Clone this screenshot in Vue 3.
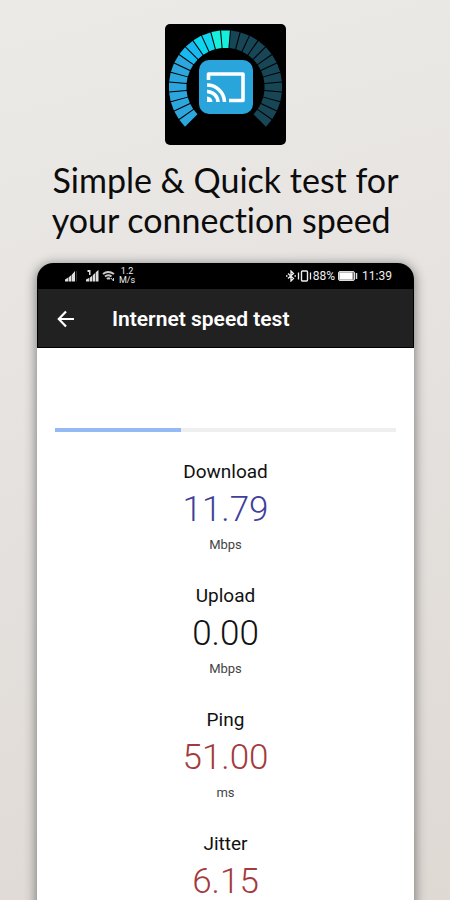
<script setup>
const segments = Array.from({ length: 27 }, (_, i) => {
  const angle = -130 + i * 10
  let color = '#174657'
  if (i < 8) color = '#2ca6dc'
  else if (i < 10) color = '#17b9f0'
  else if (i < 12) color = '#0fd5ee'
  else if (i < 14) color = '#16efdc'
  return { angle, color }
})

const progress = 37

const metrics = [
  { label: 'Download', value: '11.79', unit: 'Mbps', tone: 'blue' },
  { label: 'Upload', value: '0.00', unit: 'Mbps', tone: 'dark' },
  { label: 'Ping', value: '51.00', unit: 'ms', tone: 'red' },
  { label: 'Jitter', value: '6.15', unit: '', tone: 'red' },
]
</script>

<template>
  <div class="page">
    <header class="promo">
      <svg class="logo" viewBox="0 0 121 121" aria-hidden="true">
        <rect width="121" height="121" rx="5" fill="#000" />
        <path
          v-for="s in segments"
          :key="s.angle"
          d="M-4.4 -56.5 L4.4 -56.5 L2.9 -39 L-2.9 -39 Z"
          :fill="s.color"
          :transform="`translate(60.5 63) rotate(${s.angle})`"
        />
        <rect x="34" y="36" width="54" height="54" rx="10" fill="#2aa5dc" />
        <g fill="none" stroke="#fff" stroke-width="3.6">
          <path d="M43.5 56 V50 H78 V76.5 H64" stroke-linejoin="round" />
          <path d="M42 61 A17.5 17.5 0 0 1 59.5 78" />
          <path d="M42 67.5 A11 11 0 0 1 53 78" />
        </g>
        <path d="M42 72.5 A5.5 5.5 0 0 1 47.5 78 H42 Z" fill="#fff" />
      </svg>
      <h1 class="headline">Simple &amp; Quick test for<br />your connection speed&nbsp;</h1>
    </header>

    <main class="phone">
      <div class="status">
        <div class="status-left">
          <svg class="signal" viewBox="0 0 14 12" aria-hidden="true">
            <path d="M0 11.5 V9.5 L4 7 L7 4.5 L10 1 V11.5Z" fill="#ddd" />
            <path d="M3.5 6 V12 M6.5 4 V12" stroke="#000" stroke-width=".5" />
            <path d="M11 11.5 V1 H12 V11.5Z" fill="#333" />
          </svg>
          <svg class="signal" viewBox="0 0 14 12" aria-hidden="true">
            <path d="M0 11.5 V9.5 L4 7.5 L7 5 L10 2 L12.5 0 V11.5Z M1.500 0 H4.500 V5 H3 V2 H1.500Z" fill="#ddd" />
            <path d="M3.5 6 V12 M6.5 3 V12 M9.5 1 V12" stroke="#000" stroke-width=".6" />
          </svg>
          <svg class="wifi" viewBox="0 0 13 12" aria-hidden="true">
            <path d="M1 4 Q6 0 12 4 M3 6.5 Q6 4 9.5 6.5 M5 9 Q6.5 7.5 8 9" fill="none" stroke="#ccc" stroke-width="2" />
            <path d="M9 8 L11.5 11 M11.5 8 V11" stroke="#ccc" stroke-width="1" />
          </svg>
          <span class="rate">1.2<br />M/s</span>
        </div>
        <div class="status-right">
          <svg class="bluetooth" viewBox="0 0 10 12" aria-hidden="true">
            <path d="M2 3.5 L7.5 8.5 L5 11 V1 L7.5 3.5 L2 8.5 M0 6 H1.5 M8.5 6 H10" fill="none" stroke="#eee" stroke-width="1.3" />
          </svg>
          <svg class="vibrate" viewBox="0 0 15 12" aria-hidden="true">
            <rect x="4.5" y="1" width="6" height="10" rx="1" fill="none" stroke="#eee" stroke-width="1.4" />
            <path d="M1.5 2.5 V9.5 M13.5 2.5 V9.5" stroke="#eee" stroke-width="1.3" />
          </svg>
          <span>88%</span>
          <svg class="battery" viewBox="0 0 20 10" aria-hidden="true">
            <rect x=".5" y=".5" width="16" height="9" rx="1.5" fill="#777" stroke="#ddd" />
            <rect x="1.5" y="1.5" width="13" height="7" fill="#fff" />
            <path d="M18.5 2 V8" stroke="#ddd" stroke-width="1.5" />
          </svg>
          <span class="time">11:39</span>
        </div>
      </div>

      <div class="appbar">
        <button class="back" type="button" aria-label="Back">
          <svg viewBox="0 0 18 18" aria-hidden="true">
            <path d="M17 9 H2 M9 1.5 L1.8 9 L9 16.5" fill="none" stroke="#fff" stroke-width="2.2" />
          </svg>
        </button>
        <h2 class="title">Internet speed test</h2>
      </div>

      <div class="content">
        <div class="track" role="progressbar" aria-label="Test progress" :aria-valuenow="progress" aria-valuemin="0" aria-valuemax="100">
          <div class="fill" :style="{ width: progress + '%' }"></div>
        </div>
        <section v-for="m in metrics" :key="m.label" class="metric">
          <h3 class="label">{{ m.label }}</h3>
          <p class="value" :class="m.tone">{{ m.value }}</p>
          <p v-if="m.unit" class="unit">{{ m.unit }}</p>
        </section>
      </div>
    </main>
  </div>
</template>

<style>
body {
  margin: 0;
}
</style>

<style scoped>
.page {
  box-sizing: border-box;
  height: 100vh;
  overflow: hidden;
  padding: 24px 36px 0 37px;
  background: linear-gradient(165deg, #eceae7 0%, #e5e2df 45%, #dfd9d4 100%);
  font-family: Roboto, sans-serif;
}
.promo {
  display: flex;
  flex-direction: column;
  align-items: center;
}
.logo {
  width: 121px;
  height: 121px;
}
.headline {
  margin: 15px 0 0;
  font: 400 34px/40px Lato, sans-serif;
  font-variant-ligatures: none;
  color: #0c0c0c;
  text-align: center;
  white-space: nowrap;
}
.phone {
  margin-top: 23px;
  border-radius: 16px 16px 0 0;
  background: #fff;
  box-shadow: 0 2px 12px 1px rgba(0, 0, 0, 0.45);
  overflow: hidden;
}
.status {
  display: flex;
  justify-content: space-between;
  align-items: center;
  height: 26px;
  padding: 0 22px 0 28px;
  background: #000;
  color: #eee;
  font-size: 12px;
}
.status-left,
.status-right {
  display: flex;
  align-items: center;
}
.status-left {
  gap: 2px;
}
.signal {
  width: 14px;
  height: 12px;
}
.signal + .signal {
  margin-left: 5px;
}
.wifi {
  width: 13px;
  height: 12px;
}
.rate {
  margin-left: 2px;
  font-size: 9px;
  line-height: 9px;
  text-align: center;
}
.status-right {
  gap: 1px;
}
.bluetooth {
  width: 10px;
  height: 12px;
}
.vibrate {
  width: 15px;
  height: 12px;
}
.battery {
  width: 20px;
  height: 10px;
  margin-left: 2px;
}
.time {
  margin-left: 3px;
}
.appbar {
  display: flex;
  align-items: center;
  gap: 37px;
  height: 57px;
  padding: 1px 19px 0;
  border: solid #000;
  border-width: 0 1px 1px;
  background: #212121;
}
.back {
  display: flex;
  padding: 0;
  border: 0;
  background: none;
}
.back svg {
  width: 18px;
  height: 18px;
}
.title {
  margin: 0;
  font-size: 21px;
  font-weight: 600;
  line-height: 26px;
  color: #fff;
}
.content {
  padding: 80px 18px 0;
}
.track {
  height: 4px;
  margin-bottom: 28px;
  background: #efefef;
}
.fill {
  height: 100%;
  background: #94b9f4;
}
.metric {
  margin-bottom: 31px;
  text-align: center;
}
.label {
  margin: 0;
  font-size: 19px;
  font-weight: 400;
  line-height: 24px;
  color: #111;
}
.value {
  margin: 9px 0 10px;
  font-size: 35px;
  font-weight: 300;
  line-height: 34px;
}
.unit {
  margin: 0;
  font-size: 13px;
  line-height: 16px;
  color: #444;
}
.blue {
  color: #3f3f9c;
}
.dark {
  color: #111;
}
.red {
  color: #a33a40;
}
</style>
